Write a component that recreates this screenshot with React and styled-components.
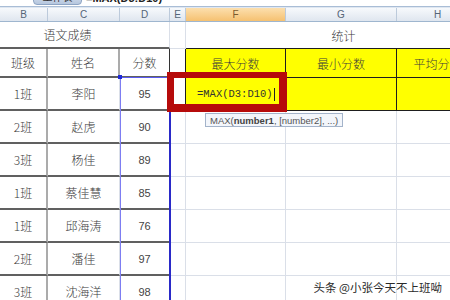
import React from "react";
import styled, { createGlobalStyle, css } from "styled-components";

const Global = createGlobalStyle`
  html, body { margin: 0; padding: 0; background: #fff; }
  body { overflow: hidden; }
  #root { width: 450px; height: 300px; overflow: hidden; }
`;

const COLS = "48px 72px 50px 16px 100px 111px 82px";

const DARK = "2px solid #606060";
const GRAY2 = "2px solid #ababab";
const GRID = "1px solid #dadfe8";
const BLACK = "1px solid #1e1e1e";

const Page = styled.div`
  position: relative;
  width: 450px;
  height: 300px;
  overflow: hidden;
  background: #fff;
`;

const TopStrip = styled.div`
  height: 6px;
  display: flex;
  align-items: flex-end;
  gap: 4px;
  padding-left: 33px;
  overflow: hidden;
  border-bottom: 1px solid #a9bdd6;
`;

const SheetTab = styled.div`
  flex: none;
  width: 49px;
  height: 13px;
  margin-bottom: 1px;
  border-radius: 0 0 4px 4px;
  background: linear-gradient(#d9e3f1, #b6c7de);
  border: 1px solid #8ea5c4;
  box-sizing: border-box;
  font: 10px "Noto Sans CJK SC", sans-serif;
  color: #333;
  text-align: center;
  line-height: 8px;
`;

const FormulaEcho = styled.div`
  flex: none;
  height: 13px;
  font: bold 11px "Liberation Sans", sans-serif;
  color: #222;
  line-height: 11px;
`;

const HeaderRow = styled.div`
  display: grid;
  grid-template-columns: ${COLS};
  height: 15px;
  border-top: 1px solid #dfe7f1;
  border-bottom: 1px solid #9fb6cf;
  box-sizing: border-box;
`;

const ColHead = styled.div`
  display: flex;
  align-items: center;
  justify-content: center;
  border-right: 1px solid #bccadb;
  font: 10px "Liberation Sans", sans-serif;
  color: #556577;
  background: ${(p) =>
    p.$active
      ? "linear-gradient(#fcdfae, #f5c171)"
      : "linear-gradient(#f7f9fc, #dfe6ef)"};
  ${(p) => p.$active && css`color: #7b5a2c;`}
`;

const Sheet = styled.div`
  display: grid;
  grid-template-columns: ${COLS};
  grid-template-rows: 27px 29px repeat(7, 33px);
`;

const Cell = styled.div`
  box-sizing: border-box;
  grid-column: span ${(p) => p.$span || 1};
  display: flex;
  align-items: center;
  justify-content: ${(p) => p.$align || "center"};
  padding: ${(p) => p.$pad || "0"};
  background: ${(p) => (p.$yellow ? "#ffff00" : "#fff")};
  border-right: ${(p) => p.$r || GRID};
  border-bottom: ${(p) => p.$b || GRID};
  font-family: "Noto Sans CJK SC", sans-serif;
  font-weight: 300;
  font-size: 12px;
  color: #3a3a3a;
  white-space: nowrap;
  overflow: hidden;
`;

const Num = styled.span`
  font-family: "Liberation Sans", sans-serif;
  font-size: 11px;
  color: #444;
`;

const Formula = styled.span`
  display: flex;
  align-items: center;
  font-family: "Liberation Mono", monospace;
  font-weight: 400;
  font-size: 10.5px;
  color: #333;
`;

const Caret = styled.span`
  width: 1px;
  height: 13px;
  margin-left: 1px;
  background: #222;
`;

const RangeBox = styled.div`
  position: absolute;
  left: 120px;
  top: 77px;
  width: 51px;
  bottom: 0;
  box-sizing: border-box;
  border-left: 1px solid #7d7df2;
  border-top: 1px solid #5a5af0;
  border-right: 2px solid #2a2ac8;
`;

const RangeHandle = styled.div`
  position: absolute;
  left: -3px;
  top: -3px;
  width: 4px;
  height: 4px;
  background: #1f2ad8;
`;

const RedBox = styled.div`
  position: absolute;
  left: 167px;
  top: 72px;
  width: 120px;
  height: 40px;
  box-sizing: border-box;
  border-style: solid;
  border-color: #b60b0b;
  border-width: 6px 8px 8px 7px;
`;

const Tip = styled.div`
  position: absolute;
  left: 205px;
  top: 113px;
  height: 14px;
  padding: 0 4px;
  box-sizing: border-box;
  display: flex;
  align-items: center;
  background: #f3f6fb;
  border: 1px solid #a3b3ca;
  font: 9.5px "Liberation Sans", sans-serif;
  color: #555;
  white-space: nowrap;
`;

const Bold = styled.b`
  font-weight: bold;
  color: #444;
`;

const Watermark = styled.div`
  position: absolute;
  right: 8px;
  bottom: 5px;
  font: 11.5px "Noto Sans CJK SC", sans-serif;
  color: #2a2a2a;
  text-shadow: 0 0 2px #fff, 0 0 1px #fff, 1px 1px 0 #fff, -1px -1px 0 #fff;
  white-space: nowrap;
`;

const letters = ["B", "C", "D", "E", "F", "G", "H"];

const rows = [
  ["1班", "李阳", "95"],
  ["2班", "赵虎", "90"],
  ["3班", "杨佳", "89"],
  ["1班", "蔡佳慧", "85"],
  ["1班", "邱海涛", "76"],
  ["2班", "潘佳", "97"],
  ["3班", "沈海洋", "98"],
];

export default function App() {
  return (
    <>
      <Global />
      <Page>
        <TopStrip>
          <SheetTab>工作表</SheetTab>
          <FormulaEcho>=MAX(D3:D10)</FormulaEcho>
        </TopStrip>
        <HeaderRow>
          {letters.map((l) => (
            <ColHead key={l} $active={l === "F"}>
              {l}
            </ColHead>
          ))}
        </HeaderRow>
        <Sheet>
          {/* title row */}
          <Cell $span={3} $b={DARK} $pad="0 34px 0 0">语文成绩</Cell>
          <Cell />
          <Cell $span={3} $r="none" $b={BLACK} $pad="0 0 0 22px">统计</Cell>

          {/* header row */}
          <Cell $r={GRAY2} $b={DARK}>班级</Cell>
          <Cell $r={GRAY2} $b={DARK}>姓名</Cell>
          <Cell $r="1px solid #333" $b={DARK}>分数</Cell>
          <Cell $r={BLACK} />
          <Cell $yellow $r={BLACK} $b={BLACK}>最大分数</Cell>
          <Cell $yellow $r={BLACK} $b={BLACK}>最小分数</Cell>
          <Cell $yellow $r={BLACK} $b={BLACK}>平均分数</Cell>

          {rows.map(([cls, name, score], i) => {
            const first = i === 0;
            return (
              <React.Fragment key={i}>
                <Cell $r={GRAY2} $b={DARK}>{cls}</Cell>
                <Cell $b={DARK}>{name}</Cell>
                <Cell $b={DARK}>
                  <Num>{score}</Num>
                </Cell>
                <Cell $r={first ? BLACK : GRID} />
                {first ? (
                  <>
                    <Cell $yellow $r={BLACK} $b={BLACK} $align="flex-start" $pad="0 0 0 11px">
                      <Formula>
                        =MAX(D3:D10)
                        <Caret />
                      </Formula>
                    </Cell>
                    <Cell $yellow $r={BLACK} $b={BLACK} />
                    <Cell $yellow $r={BLACK} $b={BLACK} />
                  </>
                ) : (
                  <>
                    <Cell />
                    <Cell />
                    <Cell />
                  </>
                )}
              </React.Fragment>
            );
          })}
        </Sheet>

        <RangeBox>
          <RangeHandle />
        </RangeBox>
        <RedBox />
        <Tip>
          MAX(<Bold>number1</Bold>, [number2], ...)
        </Tip>
        <Watermark>头条 @小张今天不上班呦</Watermark>
      </Page>
    </>
  );
}
